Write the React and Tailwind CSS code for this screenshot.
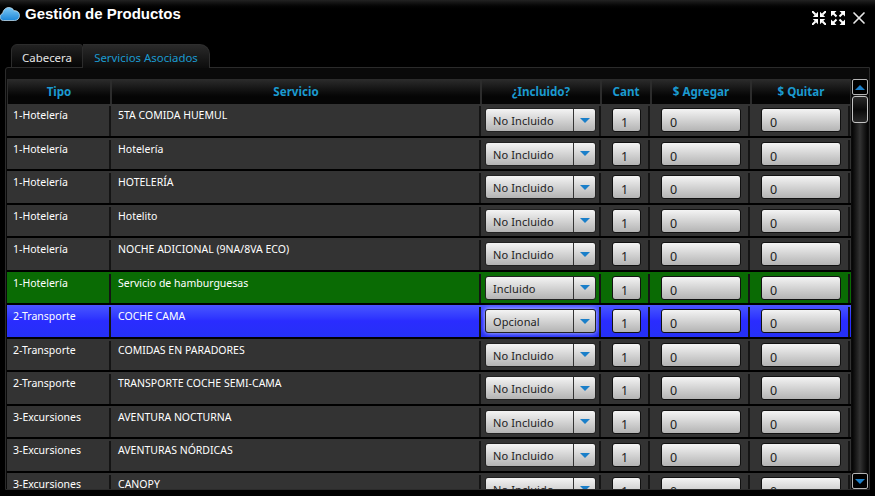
import { X } from "lucide-react";

const FONT = "font-['Noto_Sans','Open_Sans',sans-serif]";

const ROWS = [
  { tipo: "1-Hotelería", servicio: "5TA COMIDA HUEMUL", incl: "No Incluido" },
  { tipo: "1-Hotelería", servicio: "Hotelería", incl: "No Incluido" },
  { tipo: "1-Hotelería", servicio: "HOTELERÍA", incl: "No Incluido" },
  { tipo: "1-Hotelería", servicio: "Hotelito", incl: "No Incluido" },
  { tipo: "1-Hotelería", servicio: "NOCHE ADICIONAL (9NA/8VA ECO)", incl: "No Incluido" },
  { tipo: "1-Hotelería", servicio: "Servicio de hamburguesas", incl: "Incluido", estado: "verde" },
  { tipo: "2-Transporte", servicio: "COCHE CAMA", incl: "Opcional", estado: "azul" },
  { tipo: "2-Transporte", servicio: "COMIDAS EN PARADORES", incl: "No Incluido" },
  { tipo: "2-Transporte", servicio: "TRANSPORTE COCHE SEMI-CAMA", incl: "No Incluido" },
  { tipo: "3-Excursiones", servicio: "AVENTURA NOCTURNA", incl: "No Incluido" },
  { tipo: "3-Excursiones", servicio: "AVENTURAS NÓRDICAS", incl: "No Incluido" },
  { tipo: "3-Excursiones", servicio: "CANOPY", incl: "No Incluido" },
];

function Cloud() {
  return (
    <svg width="20" height="14" viewBox="0 0 20 14" className="shrink-0">
      <defs>
        <linearGradient id="nube" x1="0" y1="0" x2="0" y2="1">
          <stop offset="0" stopColor="#7cc8f5" />
          <stop offset="1" stopColor="#1d86d8" />
        </linearGradient>
      </defs>
      <path
        d="M3.5 13.5C1.2 13.5 0 12 0 10c0-1.700 1-3 2.600-3.400C3.200 3 5.700.5 8.800.5c2.300 0 4.200 1.200 5.200 3.200 3-.3 5.500 1.700 5.500 4.800 0 3-2.200 5-5 5Z"
        fill="url(#nube)"
        stroke="#d9effc"
        strokeWidth="0.7"
      />
    </svg>
  );
}

// four little arrows, pointing inwards or outwards
function Arrows({ out }) {
  const tri = out
    ? ["M0 0h5.500L0 5.500Z", "M14 0H8.500L14 5.500Z", "M0 14H5.500L0 8.500Z", "M14 14H8.500L14 8.500Z"]
    : ["M6 6H.8L6 .8Z", "M8 6h5.200L8 .8Z", "M6 8H.8L6 13.200Z", "M8 8h5.200L8 13.200Z"];
  const bar = out
    ? "M1.500 1.500 5.500 5.500M12.500 1.500 8.500 5.500M1.500 12.500 5.500 8.500M12.500 12.500 8.500 8.500"
    : "M0 0 3.500 3.500M14 0 10.500 3.500M0 14 3.500 10.500M14 14 10.500 10.500";
  return (
    <svg width="14" height="14" viewBox="0 0 14 14">
      <path d={tri.join("")} fill="#fff" />
      <path d={bar} stroke="#fff" strokeWidth="2" />
    </svg>
  );
}

function HeadCell({ className, children }) {
  return (
    <div className={`h-[25px] border-t border-l border-r border-[#2c2c2c] bg-gradient-to-b from-[#2a2a2a] to-[#050505] to-70% flex items-center justify-center text-[11.6px] font-bold text-[#1b9ad0] ${className}`}>
      {children}
    </div>
  );
}

function Field({ w, value }) {
  return (
    <div className={`${w} h-[24px] rounded-[3px] border border-[#111] bg-gradient-to-b from-[#f4f4f4] to-[#b4b4b4] px-[8px] pt-[6px] text-[12.5px] leading-[16px] text-[#222]`}>
      {value}
    </div>
  );
}

function Select({ value, azul }) {
  return (
    <div className={`w-[111px] h-[24px] rounded-[3px] border border-[#222] bg-gradient-to-b from-[#f4f4f4] to-[#b4b4b4] flex text-[11px] text-[#222] ${azul ? "shadow-[0_0_5px_#c9d2ff]" : ""}`}>
      <div className="flex-1 pl-[7px] leading-[23px] tracking-[0.1px]">{value}</div>
      <div className="w-[22px] border-l border-[#333] flex items-center justify-center">
        <div className="w-0 h-0 border-l-[5px] border-r-[5px] border-t-[5px] border-l-transparent border-r-transparent border-t-[#1a7fc9]" />
      </div>
    </div>
  );
}

function Row({ row }) {
  let bg = "bg-[#333333]";
  if (row.estado === "verde") bg = "bg-[#0a6b04]";
  if (row.estado === "azul") bg = "bg-gradient-to-b from-[#4a55ff] via-[#2a2cff] to-[#2530f5]";
  const sep = "mt-[2px] border-r-2 border-[#141414]";
  return (
    <div className={`h-[33.5px] flex shrink-0 border-b-2 border-black ${bg}`}>
      <div className={`w-[104px] pl-[6px] pt-[1px] text-[10.5px] leading-[16px] text-white ${sep}`}>
        {row.tipo}
      </div>
      <div className={`w-[370px] pl-[7px] pt-[1px] text-[10.5px] leading-[16px] text-white ${sep}`}>
        {row.servicio}
      </div>
      <div className={`w-[120px] pl-[4px] pt-[2px] ${sep}`}>
        <Select value={row.incl} azul={row.estado === "azul"} />
      </div>
      <div className={`w-[49px] pl-[11px] pt-[2px] ${sep}`}>
        <Field w="w-[29px]" value="1" />
      </div>
      <div className={`w-[100px] pl-[11px] pt-[2px] ${sep}`}>
        <Field w="w-[80px]" value="0" />
      </div>
      <div className={`w-[100px] pl-[11px] pt-[2px] ${sep}`}>
        <Field w="w-[80px]" value="0" />
      </div>
    </div>
  );
}

function ScrollBtn({ up }) {
  return (
    <div className="h-[16px] w-[16px] rounded-[2px] border border-[#b5b5b5] bg-black flex items-center justify-center shrink-0">
      <div className={`w-0 h-0 border-l-[5px] border-r-[5px] border-l-transparent border-r-transparent ${up ? "border-b-[5px] border-b-[#1a7fc9]" : "border-t-[5px] border-t-[#1a7fc9]"}`} />
    </div>
  );
}

export default function App() {
  return (
    <div className={`w-[875px] h-[496px] overflow-hidden bg-black flex flex-col ${FONT}`}>
      {/* Title bar */}
      <div className="h-[44px] shrink-0 bg-gradient-to-b from-[#222] to-black to-[25%] flex items-start">
        <div className="mt-[7px]"><Cloud /></div>
        <div className="ml-[5px] mt-[3px] text-[15px] leading-[22px] font-bold text-white font-['Liberation_Sans',sans-serif]">
          Gestión de Productos
        </div>
        <div className="ml-auto mt-[8px] mr-[7px] flex items-center gap-[5px]">
          <Arrows />
          <Arrows out />
          <X size={20} color="#e8e8e8" strokeWidth={2} className="-mx-[1px]" />
        </div>
      </div>

      {/* Tabs */}
      <div className="h-[24px] shrink-0 flex text-[11.4px] leading-[25px] relative z-10 -mb-px">
        <div className="ml-[11px] w-[72px] text-center text-[#e6e6e6] rounded-tl-[6px] rounded-tr-[3px] border border-[#2c2c2c] bg-gradient-to-b from-[#222] to-[#060606]">
          Cabecera
        </div>
        <div className="w-[127px] text-center text-[#1b9ad0] rounded-tr-[10px] border-t border-r border-[#2e2e2e] bg-gradient-to-b from-[#2a2a2a] to-[#0d0d0d]">
          Servicios Asociados
        </div>
      </div>

      {/* Panel */}
      <div className="h-[423px] ml-[5px] mr-[5px] rounded-tl-[3px] border border-[#2b2b2b] bg-[#0a0a0a] pt-[11px] pl-px flex overflow-hidden">
        <div className="w-[844px] shrink-0 flex flex-col overflow-hidden">
          <div className="flex shrink-0">
            <HeadCell className="w-[104px]">Tipo</HeadCell>
            <HeadCell className="w-[370px]">Servicio</HeadCell>
            <HeadCell className="w-[120px]">¿Incluido?</HeadCell>
            <HeadCell className="w-[50px]">Cant</HeadCell>
            <HeadCell className="w-[100px]">$ Agregar</HeadCell>
            <HeadCell className="w-[100px]">$ Quitar</HeadCell>
          </div>
          {ROWS.map((row) => (
            <Row key={row.servicio} row={row} />
          ))}
        </div>
        {/* Scrollbar */}
        <div className="w-[16px] ml-[1px] flex flex-col bg-gradient-to-r from-[#050505] via-[#333] to-[#050505]">
          <ScrollBtn up />
          <div className="h-[27px] mt-[1px] rounded-[3px] border border-[#c4c4c4] bg-gradient-to-b from-[#2a2a2a] via-[#0a0a0a] to-[#2a2a2a] shrink-0" />
          <div className="flex-1" />
          <ScrollBtn />
        </div>
      </div>
    </div>
  );
}
